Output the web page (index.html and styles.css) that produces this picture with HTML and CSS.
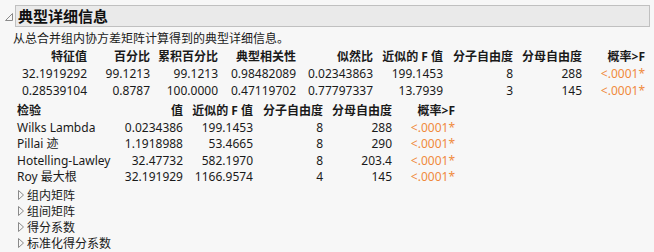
FILE: index.html
```html
<!DOCTYPE html>
<html lang="zh">
<head>
<meta charset="utf-8">
<link rel="stylesheet" href="styles.css">
</head>
<body>
<div class="report">
  <div class="title-row">
    <svg class="tri-open" width="10" height="10" viewBox="0 0 10 10"><polygon points="1.5,8.5 8.5,1.5 8.5,8.5" fill="none" stroke="#8a8a8a" stroke-width="1"/></svg>
    <div class="title-bar">典型详细信息</div>
  </div>
  <div class="content">
    <div class="subtitle">从总合并组内协方差矩阵计算得到的典型详细信息。</div>
    <div class="grid t1">
      <div class="h">特征值</div><div class="h">百分比</div><div class="h">累积百分比</div><div class="h">典型相关性</div><div class="h">似然比</div><div class="h">近似的 F 值</div><div class="h">分子自由度</div><div class="h">分母自由度</div><div class="h">概率&gt;F</div>
      <div>32.1919292</div><div>99.1213</div><div>99.1213</div><div>0.98482089</div><div>0.02343863</div><div>199.1453</div><div>8</div><div>288</div><div class="sig">&lt;.0001*</div>
      <div>0.28539104</div><div>0.8787</div><div>100.0000</div><div>0.47119702</div><div>0.77797337</div><div>13.7939</div><div>3</div><div>145</div><div class="sig">&lt;.0001*</div>
    </div>
    <div class="grid t2">
      <div class="h l">检验</div><div class="h">值</div><div class="h">近似的 F 值</div><div class="h">分子自由度</div><div class="h">分母自由度</div><div class="h">概率&gt;F</div>
      <div class="l">Wilks Lambda</div><div>0.0234386</div><div>199.1453</div><div>8</div><div>288</div><div class="sig">&lt;.0001*</div>
      <div class="l">Pillai 迹</div><div>1.1918988</div><div>53.4665</div><div>8</div><div>290</div><div class="sig">&lt;.0001*</div>
      <div class="l">Hotelling-Lawley</div><div>32.47732</div><div>582.1970</div><div>8</div><div>203.4</div><div class="sig">&lt;.0001*</div>
      <div class="l">Roy 最大根</div><div>32.191929</div><div>1166.9574</div><div>4</div><div>145</div><div class="sig">&lt;.0001*</div>
    </div>
    <ul class="closed">
      <li><svg class="tri" width="8" height="12" viewBox="0 0 8 12"><polygon points="1.5,1.5 6.5,6 1.5,10.5" fill="none" stroke="#8a8a8a" stroke-width="1"/></svg>组内矩阵</li>
      <li><svg class="tri" width="8" height="12" viewBox="0 0 8 12"><polygon points="1.5,1.5 6.5,6 1.5,10.5" fill="none" stroke="#8a8a8a" stroke-width="1"/></svg>组间矩阵</li>
      <li><svg class="tri" width="8" height="12" viewBox="0 0 8 12"><polygon points="1.5,1.5 6.5,6 1.5,10.5" fill="none" stroke="#8a8a8a" stroke-width="1"/></svg>得分系数</li>
      <li><svg class="tri" width="8" height="12" viewBox="0 0 8 12"><polygon points="1.5,1.5 6.5,6 1.5,10.5" fill="none" stroke="#8a8a8a" stroke-width="1"/></svg>标准化得分系数</li>
    </ul>
  </div>
</div>
</body>
</html>
```
FILE: styles.css
```css
html, body {
  margin: 0;
  padding: 0;
  background: #f7f7f7;
}
body {
  font-family: "Noto Sans", "Noto Sans CJK SC", sans-serif;
  font-size: 12px;
  color: #1a1a1a;
  width: 654px;
  height: 252px;
  overflow: hidden;
}
.report {
  padding-top: 5px;
}
.title-row {
  display: flex;
  align-items: center;
  padding-left: 4px;
  padding-right: 4px;
  gap: 1px;
}
.tri-open {
  flex: none;
  margin-top: 1px;
}
.title-bar {
  flex: 1;
  height: 20px;
  line-height: 20px;
  border: 1px solid #c0c0c0;
  background: #eaeaea;
  font-family: "Noto Sans CJK SC", sans-serif;
  font-weight: bold;
  font-size: 15px;
  padding-left: 2px;
  color: #111;
}
.content {
  padding-left: 13px;
}
.subtitle {
  font-family: "Noto Sans CJK SC", sans-serif;
  line-height: 16px;
  margin-top: 3px;
}
.grid {
  display: grid;
  line-height: 17px;
  white-space: nowrap;
}
.grid > div {
  text-align: right;
}
.grid .l {
  text-align: left;
}
.grid .h {
  font-weight: bold;
  font-family: "Noto Sans", "Noto Sans CJK SC", sans-serif;
}
.t1 {
  grid-template-columns: 74px 63px 68px 78px 77px 70px 70px 69px 63px;
  margin-top: 1px;
  grid-template-rows: 18px 17px 17px;
  align-items: end;
}
.t2 {
  margin-left: 4px;
  grid-template-columns: 103px 63px 70px 70px 69px 63px;
  grid-auto-rows: 16.5px;
  margin-top: 3px;
}
.t2 .h {
  height: 18px;
}
.sig {
  color: #f08a3c;
}
.closed {
  list-style: none;
  margin: 2px 0 0 4px;
  padding: 0;
}
.closed li {
  display: flex;
  align-items: center;
  height: 16px;
  font-family: "Noto Sans CJK SC", sans-serif;
  gap: 2px;
}
.tri {
  flex: none;
}
```
